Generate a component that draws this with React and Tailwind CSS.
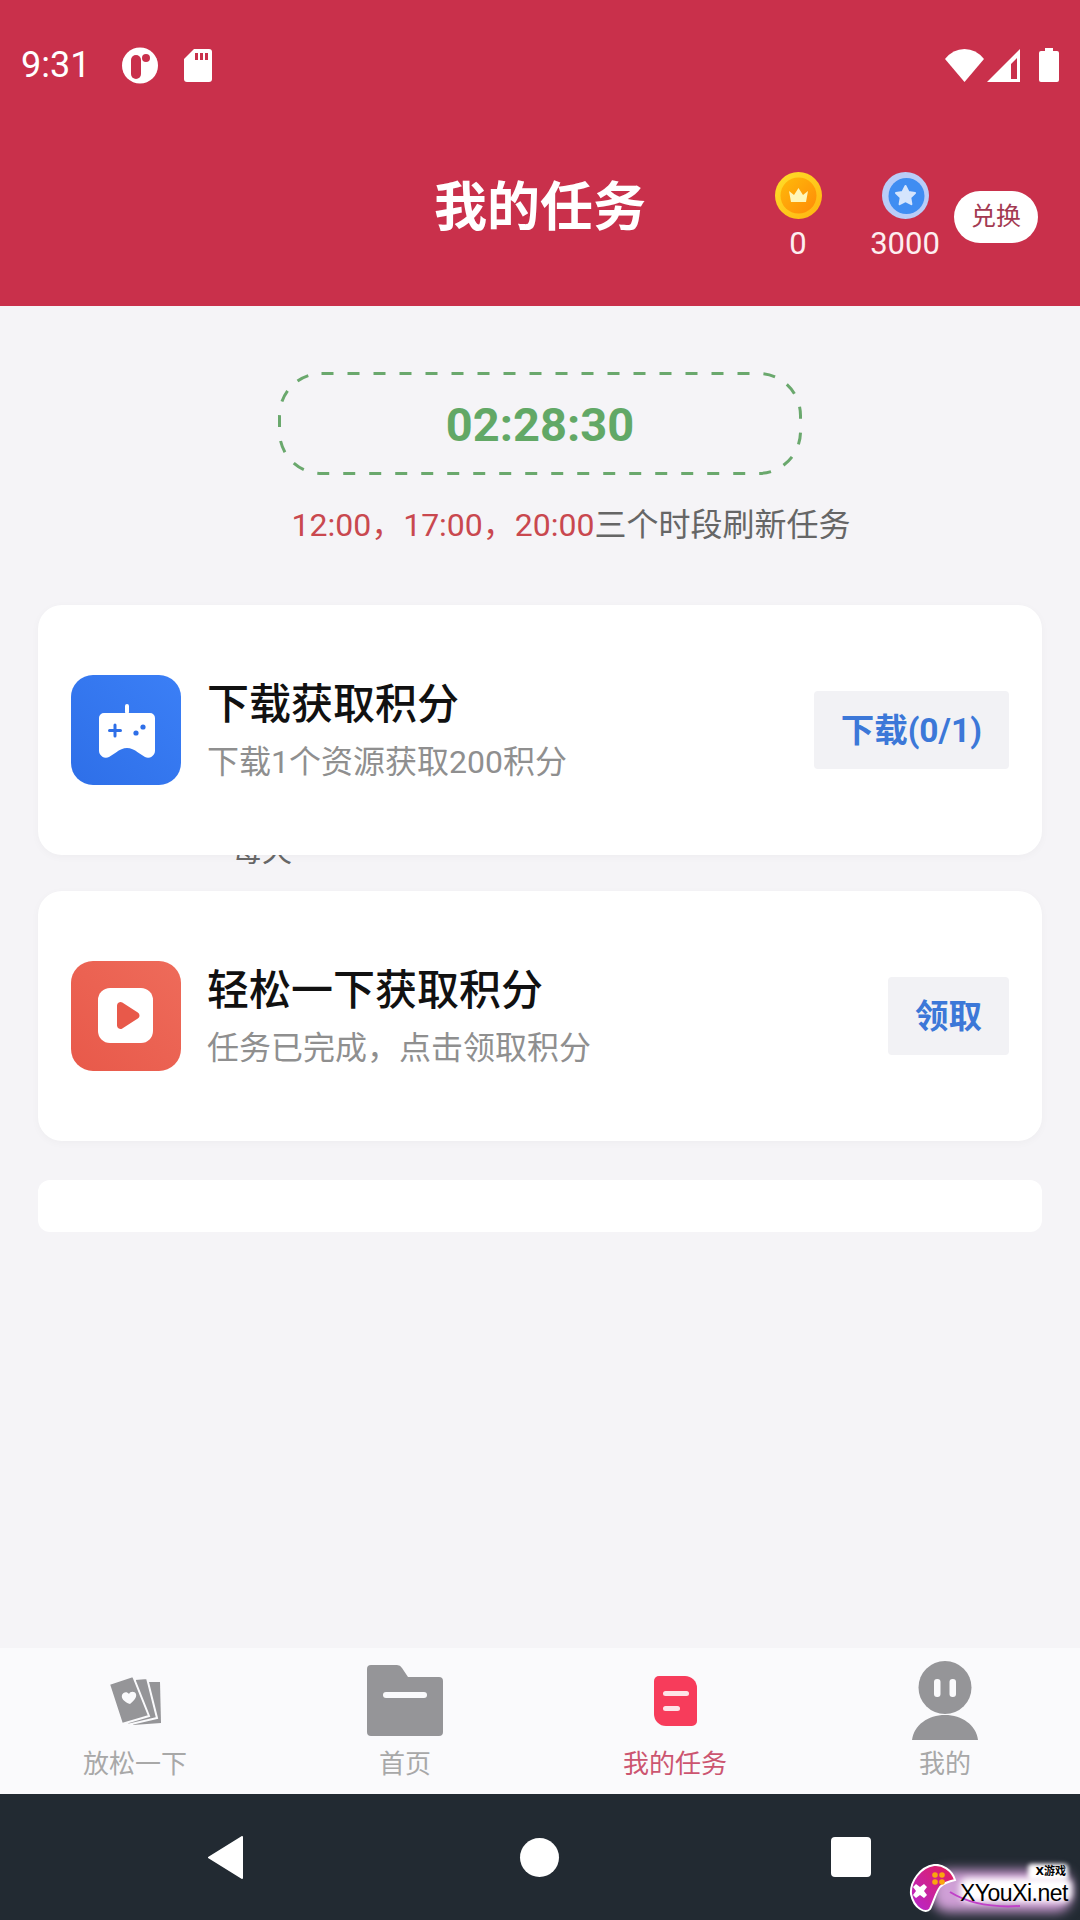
import React from "react";

const sans = "font-['Roboto','Noto_Sans_CJK_SC',sans-serif]";

function GameIcon() {
  return (
    <svg width="110" height="110" viewBox="0 0 110 110" className="shrink-0">
      <defs>
        <linearGradient id="blueBg" x1="0" y1="1" x2="1" y2="0">
          <stop offset="0" stopColor="#2e6fe8" />
          <stop offset="1" stopColor="#3b7ff6" />
        </linearGradient>
      </defs>
      <rect width="110" height="110" rx="22" fill="url(#blueBg)" />
      <rect x="54" y="29" width="4" height="10" rx="2" fill="#fff" />
      <path
        d="M33 38H79a5 5 0 0 1 5 5V76a7 7 0 0 1-10 6l-7-4.500q-11-9-22 0l-7 4.500a7 7 0 0 1-10-6V43a5 5 0 0 1 5-5Z"
        fill="#fff"
      />
      <path d="M44 50v11M38.500 55.500h11" stroke="#2e6fe8" strokeWidth="3" strokeLinecap="round" />
      <circle cx="65" cy="58" r="2.600" fill="#2e6fe8" />
      <circle cx="72" cy="52" r="2.600" fill="#2e6fe8" />
    </svg>
  );
}

function PlayIcon() {
  return (
    <svg width="110" height="110" viewBox="0 0 110 110" className="shrink-0">
      <defs>
        <linearGradient id="redBg" x1="0" y1="1" x2="1" y2="0">
          <stop offset="0" stopColor="#e8594a" />
          <stop offset="1" stopColor="#ee6b5a" />
        </linearGradient>
      </defs>
      <rect width="110" height="110" rx="22" fill="url(#redBg)" />
      <rect x="27" y="27" width="55" height="55" rx="12" fill="#fff" />
      <path
        d="M46 44.500a3.500 3.500 0 0 1 5.300-3l15.500 10a3.500 3.500 0 0 1 0 6l-15.500 10a3.500 3.500 0 0 1-5.300-3Z"
        fill="#e8594a"
      />
    </svg>
  );
}

function CrownCoin() {
  return (
    <svg width="47" height="47" viewBox="0 0 47 47">
      <defs>
        <linearGradient id="goldRim" x1="0" y1="0" x2="1" y2="1">
          <stop offset="0" stopColor="#ffe02a" />
          <stop offset="1" stopColor="#ffb30f" />
        </linearGradient>
        <linearGradient id="goldIn" x1="0" y1="0" x2="1" y2="1">
          <stop offset="0" stopColor="#ffba0a" />
          <stop offset="1" stopColor="#ff8a08" />
        </linearGradient>
      </defs>
      <circle cx="23.500" cy="23.500" r="23.500" fill="url(#goldRim)" />
      <circle cx="23.500" cy="23.500" r="18" fill="url(#goldIn)" />
      <path d="M14 19l5 4 4.500-7 4.500 7 5-4-2 11H16Z" fill="#fff6b8" strokeLinejoin="round" />
    </svg>
  );
}

function StarCoin() {
  return (
    <svg width="47" height="47" viewBox="0 0 47 47">
      <circle cx="23.500" cy="23.500" r="23.500" fill="#b9cdf8" />
      <circle cx="24.500" cy="24" r="18" fill="#3f8df2" />
      <path
        d="M23.500 14l3 6 6.500 1-4.700 4.600 1.100 6.600-5.900-3.100-5.900 3.100 1.100-6.600L14 21l6.500-1Z"
        fill="#d5e5fd"
        stroke="#d5e5fd"
        strokeWidth="2"
        strokeLinejoin="round"
      />
    </svg>
  );
}

function StatusBar() {
  return (
    <div className="flex h-[130px] items-center pl-[21px] pr-[21px] text-white">
      <span className="w-[101px] text-[36px] leading-[40px] font-['Roboto',sans-serif]">9:31</span>
      <svg width="36" height="37" viewBox="0 0 36 37">
        <circle cx="18" cy="18.500" r="18" fill="#fff" />
        <rect x="9" y="8" width="10" height="24" rx="5" fill="#c9304b" />
        <circle cx="24" cy="11" r="4" fill="#c9304b" />
      </svg>
      <svg width="28" height="33" viewBox="0 0 28 33" className="ml-[26px]">
        <path
          d="M10 0H25a3 3 0 0 1 3 3V30a3 3 0 0 1-3 3H3a3 3 0 0 1-3-3V10Z"
          fill="#fff"
        />
        <path d="M11 4h3v7h-3ZM16 4h3v7h-3ZM21 4h3v7h-3Z" fill="#c9304b" />
      </svg>
      <div className="flex-1" />
      <svg width="39" height="33" viewBox="0 0 39 33">
        <path d="M19.500 33L0 10Q8 0 19.500 0T39 10Z" fill="#fff" />
      </svg>
      <svg width="33" height="33" viewBox="0 0 33 33" className="ml-[3px]">
        <path fillRule="evenodd" d="M33 0V33H0ZM30 9L24 15V30H30Z" fill="#fff" />
      </svg>
      <svg width="20" height="34" viewBox="0 0 20 34" className="ml-[19px]">
        <path d="M6 0H14V3H18a2 2 0 0 1 2 2V32a2 2 0 0 1-2 2H2a2 2 0 0 1-2-2V5a2 2 0 0 1 2-2H6Z" fill="#fff" />
      </svg>
    </div>
  );
}

function TaskCard({ icon, title, desc, action }) {
  return (
    <div className="mx-[38px] flex h-[250px] items-center rounded-[24px] bg-white pl-[33px] pr-[33px] shadow-[0_2px_8px_rgba(0,0,0,0.03)]">
      {icon}
      <div className="ml-[26px] flex-1 pt-[3px]">
        <div className="text-[42px] leading-[50px] font-medium text-[#111]">{title}</div>
        <div className="mt-[10px] text-[32px] leading-[44px] text-[#8f8f8f]">{desc}</div>
      </div>
      <div className="flex h-[78px] items-center rounded-[4px] bg-[#f2f2f5] px-[27px] pt-[2px] text-[33.500px] font-bold text-[#3c78d8]">
        {action}
      </div>
    </div>
  );
}

function TabItem({ icon, label, active }) {
  return (
    <div className="flex flex-1 flex-col items-center">
      <div className="flex h-[88px] items-end justify-center">{icon}</div>
      <div className={`mt-[10px] text-[26px] leading-[36px] ${active ? "text-[#cc5570]" : "text-[#a8a8a8]"}`}>
        {label}
      </div>
    </div>
  );
}

export default function App() {
  return (
    <div className={`flex h-[1920px] w-[1080px] flex-col overflow-hidden bg-[#f5f4f7] ${sans}`}>
      {/* 顶部 */}
      <header className="h-[306px] shrink-0 bg-[#c9304b]">
        <StatusBar />
        <div className="grid grid-cols-[1fr_auto_1fr] pt-[42px]">
          <div />
          <h1 className="pt-[1px] text-[53px] leading-[70px] font-bold text-white">我的任务</h1>
          <div className="flex justify-end pr-[42px]">
            <div className="flex w-[70px] flex-col items-center">
              <CrownCoin />
              <span className="mt-[7px] text-[31px] leading-[36px] text-[#fdeef0]">0</span>
            </div>
            <div className="ml-[37px] flex w-[70px] flex-col items-center">
              <StarCoin />
              <span className="mt-[7px] text-[31px] leading-[36px] text-[#fdeef0]">3000</span>
            </div>
            <div className="ml-[14px] mt-[19px] flex h-[52px] w-[84px] items-center justify-center rounded-full bg-white text-[25px] text-[#a33a52]">
              兑换
            </div>
          </div>
        </div>
      </header>

      {/* 内容 */}
      <main className="flex-1">
        <div className="relative mx-auto mt-[66px] flex h-[103px] w-[524px] items-center justify-center pt-[3px]">
          <svg width="524" height="103" className="absolute inset-0">
            <rect
              x="1.500"
              y="1.500"
              width="521"
              height="100"
              rx="42"
              fill="none"
              stroke="#6aa86d"
              strokeWidth="3"
              strokeDasharray="12 14"
            />
          </svg>
          <span className="text-[47px] font-bold text-[#62a866]">02:28:30</span>
        </div>
        <div className="mt-[30px] pl-[62px] text-center text-[32px] leading-[40px] text-[#666]">
          <span className="text-[#c9484f]">{"12:00\uFF0C17:00\uFF0C20:00"}</span>三个时段刷新任务
        </div>

        <div className="mt-[60px]">
          <TaskCard icon={<GameIcon />} title="下载获取积分" desc="下载1个资源获取200积分" action="下载(0/1)" />
        </div>
        <div className="h-[36px] overflow-hidden pl-[232px]">
          <div className="-mt-[19px] text-[30px] leading-[30px] text-[#666]">每天</div>
        </div>
        <TaskCard icon={<PlayIcon />} title="轻松一下获取积分" desc={"任务已完成\uFF0C点击领取积分"} action="领取" />
        <div className="mx-[38px] mt-[39px] h-[52px] rounded-[12px] bg-white" />
      </main>

      {/* 底部标签栏 */}
      <nav className="flex h-[146px] shrink-0 bg-[#fafafc]">
        <TabItem
          label="放松一下"
          icon={
            <svg width="52" height="50" viewBox="0 0 52 50" className="mb-[11px]">
              <path d="M40 7H51L52 48L24 50Z" fill="#959598" />
              <path d="M26 4L38 3L48 43L18 50Z" fill="#959598" stroke="#fafafc" strokeWidth="2" />
              <path d="M0 9L24 1L40 41L13 49Z" fill="#959598" stroke="#fafafc" strokeWidth="2" />
              <path
                d="M21 29c-6-2-9-6-8-9 1-3 5-4 7-1 1-3 6-3 7 0 1 3-2 7-6 10Z"
                fill="#fafafc"
              />
            </svg>
          }
        />
        <TabItem
          label="首页"
          icon={
            <svg width="76" height="71" viewBox="0 0 76 71">
              <path
                d="M4 0H30a6 6 0 0 1 5 3l6 9H72a4 4 0 0 1 4 4V67a4 4 0 0 1-4 4H4a4 4 0 0 1-4-4V4a4 4 0 0 1 4-4Z"
                fill="#959598"
              />
              <rect x="16" y="27" width="44" height="6" rx="3" fill="#fafafc" />
            </svg>
          }
        />
        <TabItem
          active
          label="我的任务"
          icon={
            <svg width="43" height="50" viewBox="0 0 43 50" className="mb-[10px]">
              <path
                d="M5 0H31a12 12 0 0 1 12 12V45a5 5 0 0 1-5 5H12A12 12 0 0 1 0 38V5a5 5 0 0 1 5-5Z"
                fill="#f73c5b"
              />
              <rect x="9" y="15" width="26" height="5" rx="2.500" fill="#fde4e8" />
              <rect x="9" y="30" width="17" height="5" rx="2.500" fill="#fde4e8" />
            </svg>
          }
        />
        <TabItem
          label="我的"
          icon={
            <svg width="66" height="79" viewBox="0 0 66 79" className="-mb-[4px]">
              <circle cx="33" cy="26.500" r="26.500" fill="#959598" />
              <rect x="22" y="18" width="6.500" height="18" rx="3" fill="#fafafc" />
              <rect x="37.500" y="18" width="6.500" height="18" rx="3" fill="#fafafc" />
              <path d="M0 79C2 64 16 54 33 54S64 64 66 79Z" fill="#959598" />
            </svg>
          }
        />
      </nav>

      {/* 系统导航 */}
      <div className="relative flex h-[126px] shrink-0 items-center justify-between bg-[#222a32] pl-[207px] pr-[209px]">
        <svg width="37" height="43" viewBox="0 0 37 43">
          <path d="M2 21.500L35 1v41Z" fill="#fff" stroke="#fff" strokeWidth="2" strokeLinejoin="round" />
        </svg>
        <div className="ml-[4px] h-[39px] w-[39px] rounded-full bg-white" />
        <div className="h-[40px] w-[40px] rounded-[4px] bg-white" />

        {/* 水印 */}
        <div className="absolute left-[908px] top-[68px] h-[54px] w-[172px]">
          <div className="absolute left-[24px] top-[8px] h-[42px] w-[140px] rounded-[16px] bg-[#cf9fd6] blur-[6px]" />
          <div className="absolute left-[52px] top-[16px] h-[24px] w-[112px] rounded-[8px] bg-white blur-[3px]" />
          <div className="absolute left-[120px] top-[2px] h-[16px] w-[40px] rounded-[4px] bg-white blur-[2px]" />
          <svg width="120" height="54" viewBox="0 0 120 54" className="absolute left-0 top-0">
            <path d="M42 30C58 40 80 46 112 44" fill="none" stroke="#c040c8" strokeWidth="2" />
          </svg>
          <svg width="50" height="50" viewBox="0 0 50 50" className="absolute left-0 top-[2px]">
            <defs>
              <linearGradient id="padFill" x1="1" y1="0" x2="0" y2="1">
                <stop offset="0" stopColor="#e51e55" />
                <stop offset="1" stopColor="#b625d0" />
              </linearGradient>
            </defs>
            <path
              d="M3 30C2 18 12 3 26 1c8-1 18 5 21 15-5 1-11 3-15 7-4 5-6 14-10 22-4 5-16 0-19-15Z"
              fill="url(#padFill)"
              stroke="#fff"
              strokeWidth="2"
            />
            <path d="M8 20l4 3 4-3 3 3-3 4 3 4-3 3-4-3-4 3-3-3 3-4-3-4Z" fill="#fff" />
            <circle cx="27" cy="11" r="2.800" fill="#f9a60e" />
            <circle cx="34" cy="11" r="2.800" fill="#f9a60e" />
            <circle cx="27" cy="18" r="2.800" fill="#f9a60e" />
            <circle cx="34" cy="18" r="2.800" fill="#f9a60e" />
          </svg>
          <span className="absolute right-[14px] top-[3px] text-[11px] leading-[13px] font-bold text-black font-['DejaVu_Sans','Noto_Sans_CJK_SC',sans-serif]">
            X游戏
          </span>
          <span className="absolute left-[52px] top-[17px] text-[23px] leading-[28px] font-medium tracking-[-0.5px] text-black whitespace-nowrap font-['Liberation_Sans',sans-serif]">
            XYouXi.net
          </span>
        </div>
      </div>
    </div>
  );
}
